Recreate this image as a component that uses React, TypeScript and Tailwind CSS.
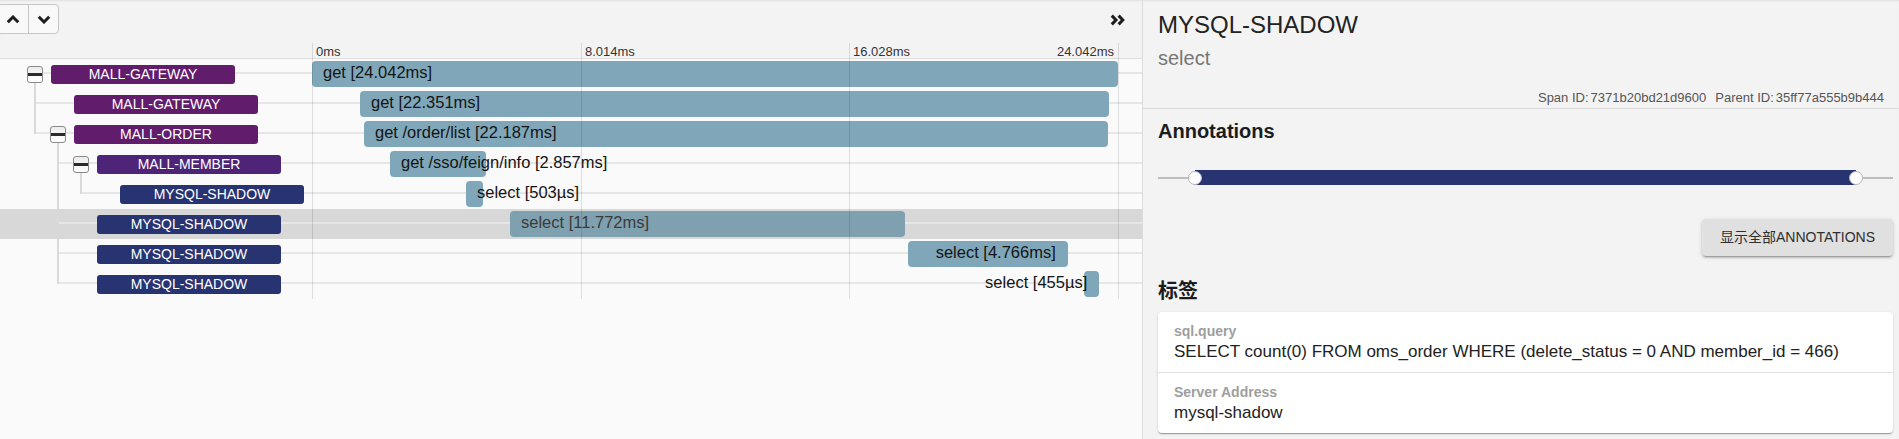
import React from "react";
import clsx from "clsx";

const TOTAL_MS = 24.042;
const TIMELINE_PX = 806;
const TIMELINE_W = 830;
const msToPx = (ms: number) => (ms / TOTAL_MS) * TIMELINE_PX;

type VLine = { x: number; top: number; h: number };

type Span = {
  service: string;
  labelClass: string;
  depth: number;
  toggle?: boolean;
  selected?: boolean;
  start: number;
  duration: number;
  text: string;
  vlines: VLine[];
};

const spans: Span[] = [
  {
    service: "MALL-GATEWAY",
    labelClass: "bg-[#611d6c]",
    depth: 0,
    toggle: true,
    start: 0,
    duration: 24.042,
    text: "get [24.042ms]",
    vlines: [{ x: 35, top: 23, h: 7 }],
  },
  {
    service: "MALL-GATEWAY",
    labelClass: "bg-[#611d6c]",
    depth: 1,
    start: 1.432,
    duration: 22.351,
    text: "get [22.351ms]",
    vlines: [{ x: 35, top: 0, h: 30 }],
  },
  {
    service: "MALL-ORDER",
    labelClass: "bg-[#611d6c]",
    depth: 1,
    toggle: true,
    start: 1.551,
    duration: 22.187,
    text: "get /order/list [22.187ms]",
    vlines: [
      { x: 35, top: 0, h: 15 },
      { x: 58, top: 23, h: 7 },
    ],
  },
  {
    service: "MALL-MEMBER",
    labelClass: "bg-[#4d2478]",
    depth: 2,
    toggle: true,
    start: 2.327,
    duration: 2.857,
    text: "get /sso/feign/info [2.857ms]",
    vlines: [
      { x: 58, top: 0, h: 30 },
      { x: 81, top: 23, h: 7 },
    ],
  },
  {
    service: "MYSQL-SHADOW",
    labelClass: "bg-[#283371]",
    depth: 3,
    start: 4.594,
    duration: 0.503,
    text: "select [503µs]",
    vlines: [
      { x: 58, top: 0, h: 30 },
      { x: 81, top: 0, h: 15 },
    ],
  },
  {
    service: "MYSQL-SHADOW",
    labelClass: "bg-[#283371]",
    depth: 2,
    selected: true,
    start: 5.906,
    duration: 11.772,
    text: "select [11.772ms]",
    vlines: [{ x: 58, top: 0, h: 30 }],
  },
  {
    service: "MYSQL-SHADOW",
    labelClass: "bg-[#283371]",
    depth: 2,
    start: 17.778,
    duration: 4.766,
    text: "select [4.766ms]",
    vlines: [{ x: 58, top: 0, h: 30 }],
  },
  {
    service: "MYSQL-SHADOW",
    labelClass: "bg-[#283371]",
    depth: 2,
    start: 23.028,
    duration: 0.455,
    text: "select [455µs]",
    vlines: [{ x: 58, top: 0, h: 15 }],
  },
];

const ticks = ["0ms", "8.014ms", "16.028ms", "24.042ms"];

const tags = [
  {
    key: "sql.query",
    value:
      "SELECT count(0) FROM oms_order WHERE (delete_status = 0 AND member_id = 466)",
  },
  { key: "Server Address", value: "mysql-shadow" },
];

const Chevron = ({ up }: { up?: boolean }) => (
  <svg width="14" height="9" viewBox="0 0 14 9">
    <polyline
      points={up ? "1.8,7.2 7,2 12.2,7.2" : "1.8,1.8 7,7 12.2,1.8"}
      fill="none"
      stroke="#1e1e1e"
      strokeWidth="3"
    />
  </svg>
);

const DoubleChevron = () => (
  <svg width="15" height="12" viewBox="0 0 15 12">
    <polyline points="1.8,1.6 6,6 1.8,10.4" fill="none" stroke="#1e1e1e" strokeWidth="3" />
    <polyline points="8.6,1.6 12.8,6 8.6,10.4" fill="none" stroke="#1e1e1e" strokeWidth="3" />
  </svg>
);

const Toggle = () => (
  <div className="relative h-[17px] w-[16px] shrink-0 rounded-[3px] border border-[#8a8a8a] bg-gradient-to-b from-[#ececec] to-white">
    <div className="absolute left-0 right-0 top-[6.5px] h-[2.5px] bg-[#2a2a2a]" />
  </div>
);

const SpanRow = ({ span }: { span: Span }) => {
  const left = msToPx(span.start);
  const width = Math.max(msToPx(span.duration), 14);
  const alignRight = span.start > TOTAL_MS / 2;
  const lineLeft = 35 + 23 * Math.max(span.depth - 1, 0);

  return (
    <div className={clsx("relative flex h-[30px]", span.selected && "bg-[#d8d8d8]")}>
      {/* row guide line */}
      <div
        className="absolute right-0 top-[13px] h-[2px] bg-[#e6e6e6]"
        style={{ left: lineLeft }}
      />
      {span.vlines.map((v, i) => (
        <div
          key={i}
          className="absolute w-[2px] bg-[#d9d9d9]"
          style={{ left: v.x - 1, top: v.top, height: v.h }}
        />
      ))}

      <div
        className="relative flex w-[312px] shrink-0 items-center"
        style={{ paddingLeft: 27 + 23 * span.depth }}
      >
        {span.toggle ? <Toggle /> : <div className="w-[16px] shrink-0" />}
        <div
          className={clsx(
            "ml-[8px] h-[19px] w-[184px] shrink-0 rounded-[3px] text-center text-[14px] leading-[19px] text-white",
            span.labelClass
          )}
        >
          {span.service}
        </div>
      </div>

      <div className="relative w-[830px] shrink-0">
        <div
          className={clsx(
            "absolute top-[2px] h-[26px] rounded-[4px]",
            span.selected ? "bg-[#7fa0ae]" : "bg-[#7fa7b9]"
          )}
          style={{ left, width }}
        />
        <div
          className={clsx(
            "absolute top-[4px] whitespace-nowrap text-[16.5px] leading-[18px]",
            span.selected ? "text-[#3a3a3a]" : "text-[#141414]"
          )}
          style={
            alignRight
              ? { right: TIMELINE_W - (left + width) + 12 }
              : { left: left + 11 }
          }
        >
          {span.text}
        </div>
      </div>
    </div>
  );
};

export default function App() {
  return (
    <div className="flex h-[439px] w-full overflow-hidden font-['Liberation_Sans','Noto_Sans_CJK_SC',sans-serif]">
      {/* Left: trace timeline */}
      <div className="flex w-[1143px] shrink-0 flex-col border-r border-[#dddddd] bg-[#fafafa]">
        <div className="flex h-[43px] items-start justify-between bg-[#f3f3f3] shadow-[inset_0_2px_2px_-1px_rgba(0,0,0,0.08)]">
          <div className="-ml-[3px] mt-[4px] flex h-[30px] rounded-[4px] border border-[#c6c6c6] bg-[#f9f9f9]">
            <button className="flex w-[31px] items-center justify-center border-r border-[#c6c6c6]">
              <Chevron up />
            </button>
            <button className="flex w-[29px] items-center justify-center">
              <Chevron />
            </button>
          </div>
          <button className="mr-[17px] mt-[14px] flex">
            <DoubleChevron />
          </button>
        </div>

        <div className="relative">
          <div className="flex h-[16px] border-b border-[#dddddd] bg-[#f3f3f3]">
            <div className="w-[312px] shrink-0" />
            <div className="relative w-[830px] shrink-0 text-[13px] leading-[14px] text-[#333]">
              {ticks.map((t, i) => {
                const x = Math.round((TIMELINE_PX / 3) * i);
                const last = i === ticks.length - 1;
                return (
                  <span
                    key={t}
                    className="absolute top-[2px] whitespace-nowrap"
                    style={last ? { right: TIMELINE_W - x + 4 } : { left: x + 4 }}
                  >
                    {t}
                  </span>
                );
              })}
            </div>
          </div>

          {spans.map((s, i) => (
            <SpanRow key={i} span={s} />
          ))}

          <div className="pointer-events-none absolute bottom-0 left-[312px] top-0 w-[830px]">
            {ticks.map((t, i) => (
              <div
                key={t}
                className="absolute bottom-0 top-0 w-px bg-[rgba(0,0,0,0.11)]"
                style={{ left: Math.round((TIMELINE_PX / 3) * i) }}
              />
            ))}
          </div>
        </div>
      </div>

      {/* Right: span detail */}
      <div className="flex flex-1 flex-col bg-[#f3f3f3] shadow-[inset_0_2px_2px_-1px_rgba(0,0,0,0.08)]">
        <div className="border-b border-[#dcdcdc] pb-[2px] pl-[15px] pr-[15px] pt-[11px]">
          <div className="text-[24px] leading-[28px] text-[#222]">MYSQL-SHADOW</div>
          <div className="mt-[7px] text-[20px] leading-[24px] text-[#777]">select</div>
          <div className="mt-[20px] flex justify-end gap-[9px] text-[13px] leading-[16px] text-[#555]">
            <span>
              Span ID:<span className="ml-[2px]">7371b20bd21d9600</span>
            </span>
            <span>
              Parent ID:<span className="ml-[2px]">35ff77a555b9b444</span>
            </span>
          </div>
        </div>

        <div className="pl-[15px] pr-[6px]">
          <div className="mt-[10px] text-[20px] font-bold leading-[24px] text-[#1c1c1c]">
            Annotations
          </div>

          <div className="relative mt-[20px] h-[30px]">
            <div className="absolute left-0 right-0 top-[14px] h-[2px] bg-[#bdbdbd]" />
            <div className="absolute left-[37px] right-[37px] top-[7px] h-[15px] bg-[#283371]" />
            <div className="absolute left-[30px] top-[8px] h-[14px] w-[14px] rounded-full border border-[#b5b5b5] bg-white" />
            <div className="absolute right-[30px] top-[8px] h-[14px] w-[14px] rounded-full border border-[#b5b5b5] bg-white" />
          </div>

          <div className="mt-[26px] flex justify-end">
            <button className="h-[37px] rounded-[4px] bg-[#e0e0e0] px-[18px] text-[14px] text-[#2f2f2f] shadow-[0_3px_1px_-2px_rgba(0,0,0,0.2),0_2px_2px_0_rgba(0,0,0,0.14),0_1px_5px_0_rgba(0,0,0,0.12)]">
              显示全部ANNOTATIONS
            </button>
          </div>

          <div className="mt-[23px] text-[20px] font-bold leading-[24px] text-[#1c1c1c]">标签</div>

          <div className="mt-[9px] rounded-[4px] bg-white shadow-[0_2px_1px_-1px_rgba(0,0,0,0.2),0_1px_1px_0_rgba(0,0,0,0.14),0_1px_3px_0_rgba(0,0,0,0.12)]">
            {tags.map((t, i) => (
              <div
                key={t.key}
                className={clsx(
                  "px-[16px] pb-[9px] pt-[9px]",
                  i > 0 && "border-t border-[#e0e0e0]"
                )}
              >
                <div className="text-[14px] font-bold leading-[20px] text-[#9e9e9e]">{t.key}</div>
                <div className="text-[17px] leading-[22px] text-[#222]">{t.value}</div>
              </div>
            ))}
          </div>
        </div>
      </div>
    </div>
  );
}
